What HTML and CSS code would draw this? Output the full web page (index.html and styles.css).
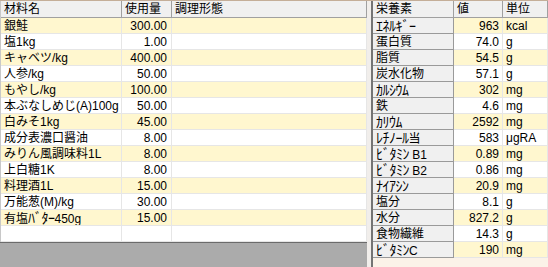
FILE: index.html
```html
<!DOCTYPE html>
<html lang="ja">
<head>
<meta charset="utf-8">
<title>材料</title>
<link rel="stylesheet" href="styles.css">
</head>
<body>
<div class="app">
  <div class="left">
    <div class="grid grid-left">
      <div class="row head"><div class="cell">材料名</div><div class="cell">使用量</div><div class="cell">調理形態</div></div>
      <div class="row odd"><div class="cell">銀鮭</div><div class="cell num">300.00</div><div class="cell"></div></div>
      <div class="row"><div class="cell">塩1kg</div><div class="cell num">1.00</div><div class="cell"></div></div>
      <div class="row odd"><div class="cell">キャベツ/kg</div><div class="cell num">400.00</div><div class="cell"></div></div>
      <div class="row"><div class="cell">人参/kg</div><div class="cell num">50.00</div><div class="cell"></div></div>
      <div class="row odd"><div class="cell">もやし/kg</div><div class="cell num">100.00</div><div class="cell"></div></div>
      <div class="row"><div class="cell">本ぶなしめじ(A)100g</div><div class="cell num">50.00</div><div class="cell"></div></div>
      <div class="row odd"><div class="cell">白みそ1kg</div><div class="cell num">45.00</div><div class="cell"></div></div>
      <div class="row"><div class="cell">成分表濃口醤油</div><div class="cell num">8.00</div><div class="cell"></div></div>
      <div class="row odd"><div class="cell">みりん風調味料1L</div><div class="cell num">8.00</div><div class="cell"></div></div>
      <div class="row"><div class="cell">上白糖1K</div><div class="cell num">8.00</div><div class="cell"></div></div>
      <div class="row odd"><div class="cell">料理酒1L</div><div class="cell num">15.00</div><div class="cell"></div></div>
      <div class="row"><div class="cell">万能葱(M)/kg</div><div class="cell num">30.00</div><div class="cell"></div></div>
      <div class="row odd"><div class="cell">有塩<span class="hk">ﾊﾞﾀｰ</span>450g</div><div class="cell num">15.00</div><div class="cell"></div></div>
      <div class="row"><div class="cell"></div><div class="cell num"></div><div class="cell"></div></div>
    </div>
    <div class="empty-area"></div>
  </div>
  <div class="splitter"></div>
  <div class="right">
    <div class="grid grid-right">
      <div class="row head"><div class="cell">栄養素</div><div class="cell">値</div><div class="cell">単位</div></div>
      <div class="row odd"><div class="cell rh"><span class="hk">ｴﾈﾙｷﾞｰ</span></div><div class="cell num">963</div><div class="cell">kcal</div></div>
      <div class="row"><div class="cell rh">蛋白質</div><div class="cell num">74.0</div><div class="cell">g</div></div>
      <div class="row odd"><div class="cell rh">脂質</div><div class="cell num">54.5</div><div class="cell">g</div></div>
      <div class="row"><div class="cell rh">炭水化物</div><div class="cell num">57.1</div><div class="cell">g</div></div>
      <div class="row odd"><div class="cell rh"><span class="hk">ｶﾙｼｳﾑ</span></div><div class="cell num">302</div><div class="cell">mg</div></div>
      <div class="row"><div class="cell rh">鉄</div><div class="cell num">4.6</div><div class="cell">mg</div></div>
      <div class="row odd"><div class="cell rh"><span class="hk">ｶﾘｳﾑ</span></div><div class="cell num">2592</div><div class="cell">mg</div></div>
      <div class="row"><div class="cell rh"><span class="hk">ﾚﾁﾉｰﾙ</span>当</div><div class="cell num">583</div><div class="cell">μgRA</div></div>
      <div class="row odd"><div class="cell rh"><span class="hk">ﾋﾞﾀﾐﾝ</span> B1</div><div class="cell num">0.89</div><div class="cell">mg</div></div>
      <div class="row"><div class="cell rh"><span class="hk">ﾋﾞﾀﾐﾝ</span> B2</div><div class="cell num">0.86</div><div class="cell">mg</div></div>
      <div class="row odd"><div class="cell rh"><span class="hk">ﾅｲｱｼﾝ</span></div><div class="cell num">20.9</div><div class="cell">mg</div></div>
      <div class="row"><div class="cell rh">塩分</div><div class="cell num">8.1</div><div class="cell">g</div></div>
      <div class="row odd"><div class="cell rh">水分</div><div class="cell num">827.2</div><div class="cell">g</div></div>
      <div class="row"><div class="cell rh">食物繊維</div><div class="cell num">14.3</div><div class="cell">g</div></div>
      <div class="row odd"><div class="cell rh"><span class="hk">ﾋﾞﾀﾐﾝ</span>C</div><div class="cell num">190</div><div class="cell">mg</div></div>
    </div>
  </div>
</div>
</body>
</html>
```
FILE: styles.css
```css
html, body {
  margin: 0;
  padding: 0;
}
body {
  background: #fbf2e8;
  font-family: "Liberation Sans", "Noto Sans CJK JP", sans-serif;
  font-size: 12px;
  color: #000;
}
.app {
  display: flex;
  height: 266px;
  border-top: 1px solid #c4ae98;
  overflow: hidden;
}
.left {
  width: 367px;
  display: flex;
  flex-direction: column;
  background: #fff;
}
.grid-left {
  border-left: 1px solid #c8c8c8;
}
.grid-left .row {
  display: grid;
  grid-template-columns: 121px 50px 195px;
}
.row {
  background: #fff;
}
.row.odd {
  background: #fff7cf;
}
.cell {
  box-sizing: border-box;
  height: 16px;
  line-height: 16px;
  padding: 0 3px;
  border-right: 1px solid #e6e6e6;
  border-bottom: 1px solid #e6e6e6;
  white-space: nowrap;
  overflow: hidden;
}
.hk {
  font-family: "Noto Sans CJK JP", sans-serif;
  font-size: 14px;
  letter-spacing: -0.5px;
  line-height: 1;
}
.num {
  text-align: right;
  padding-right: 4px;
  font-family: "Liberation Sans Narrow", "Liberation Sans", sans-serif;
}
.row.head .cell {
  height: 17px;
  line-height: 17px;
  background: #f0f0f0;
  border-right-color: #a0a0a0;
  border-bottom-color: #a0a0a0;
}
.empty-area {
  flex: 1;
  background: #ababab;
  border-top: 1px solid #6b6b6b;
}
.splitter {
  width: 4px;
  background: #f1eeeb;
}
.right {
  flex: 1;
  display: flex;
  flex-direction: column;
  border-left: 2px solid #747474;
  background: #fbf2e8;
}
.grid-right .row {
  display: grid;
  grid-template-columns: 81px 49px 1fr;
}
.grid-right .num {
  padding-right: 3px;
}
.grid-right .cell.rh {
  background: #f0f0f0;
  border-right-color: #9a9a9a;
  border-bottom-color: #9a9a9a;
}
```
